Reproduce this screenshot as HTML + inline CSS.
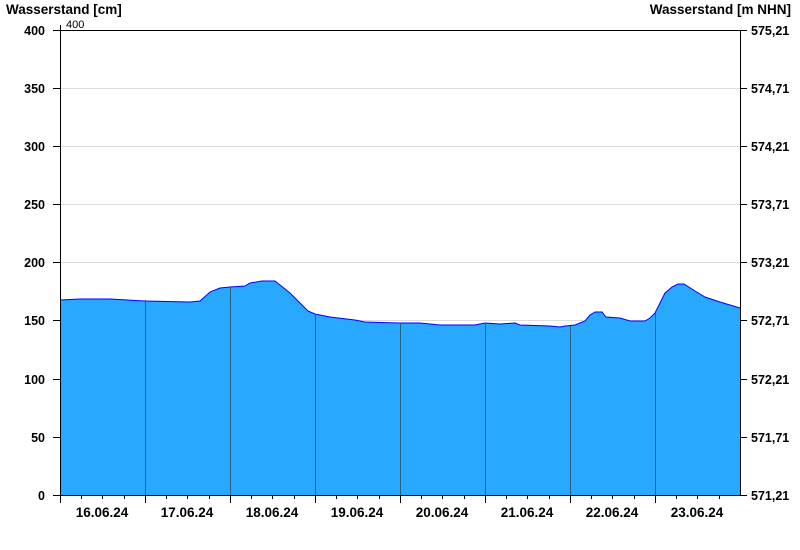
<!DOCTYPE html>
<html><head><style>body{margin:0;background:#fff}svg{display:block}text{font-family:"Liberation Sans",Arial,sans-serif}</style></head><body>
<svg width="800" height="550" xmlns="http://www.w3.org/2000/svg">
<g stroke="#dcdcdc" stroke-width="1">
<line x1="60" y1="88.5" x2="740" y2="88.5"/><line x1="60" y1="146.5" x2="740" y2="146.5"/><line x1="60" y1="204.5" x2="740" y2="204.5"/><line x1="60" y1="262.5" x2="740" y2="262.5"/><line x1="60" y1="320.5" x2="740" y2="320.5"/><line x1="60" y1="379.5" x2="740" y2="379.5"/><line x1="60" y1="437.5" x2="740" y2="437.5"/>
</g>
<path d="M60,495 L60,300 L80,299 L110,299 L145,301 L190,302 L200,301 L210,292 L220,288 L230,287 L245,286 L250,283 L262,281 L275,281 L280,285 L290,293 L300,303 L308,311 L315,314 L330,317 L355,320 L365,322 L400,323 L420,323 L440,325 L475,325 L485,323 L500,324 L515,323 L520,325 L550,326 L560,327 L565,326 L575,325 L585,321 L590,315 L595,312 L602,312 L606,317 L620,318 L630,321 L645,321 L650,318 L655,313 L660,303 L665,293 L672,287 L678,284 L684,284 L695,291 L705,297 L720,302 L730,305 L740,308 L740,495 Z" fill="#29a8ff"/>
<path d="M60,300 L80,299 L110,299 L145,301 L190,302 L200,301 L210,292 L220,288 L230,287 L245,286 L250,283 L262,281 L275,281 L280,285 L290,293 L300,303 L308,311 L315,314 L330,317 L355,320 L365,322 L400,323 L420,323 L440,325 L475,325 L485,323 L500,324 L515,323 L520,325 L550,326 L560,327 L565,326 L575,325 L585,321 L590,315 L595,312 L602,312 L606,317 L620,318 L630,321 L645,321 L650,318 L655,313 L660,303 L665,293 L672,287 L678,284 L684,284 L695,291 L705,297 L720,302 L730,305 L740,308" fill="none" stroke="#0000ff" stroke-width="1"/>
<g stroke="#2a5f80" stroke-width="1">
<line x1="145.5" y1="300" x2="145.5" y2="495"/><line x1="230.5" y1="287" x2="230.5" y2="495"/><line x1="315.5" y1="314" x2="315.5" y2="495"/><line x1="400.5" y1="323" x2="400.5" y2="495"/><line x1="485.5" y1="323" x2="485.5" y2="495"/><line x1="570.5" y1="326" x2="570.5" y2="495"/><line x1="655.5" y1="313" x2="655.5" y2="495"/>
</g>
<g stroke="#000" stroke-width="1">
<line x1="60" y1="30.5" x2="740" y2="30.5"/>
<line x1="60.5" y1="25" x2="60.5" y2="503"/>
<line x1="740.5" y1="30" x2="740.5" y2="495"/>
<line x1="53" y1="495.5" x2="740" y2="495.5"/>
<path d="M53,30.5H60M53,88.5H60M53,146.5H60M53,204.5H60M53,262.5H60M53,320.5H60M53,379.5H60M53,437.5H60"/>
<path d="M740,30.5H747M740,88.5H747M740,146.5H747M740,204.5H747M740,262.5H747M740,320.5H747M740,379.5H747M740,437.5H747M740,495.5H747"/>
<path d="M145.5,495V503M230.5,495V503M315.5,495V503M400.5,495V503M485.5,495V503M570.5,495V503M655.5,495V503"/>
<path d="M81.5,495V499M102.5,495V499M124.5,495V499M166.5,495V499M187.5,495V499M209.5,495V499M251.5,495V499M272.5,495V499M294.5,495V499M336.5,495V499M357.5,495V499M379.5,495V499M421.5,495V499M442.5,495V499M464.5,495V499M506.5,495V499M527.5,495V499M549.5,495V499M591.5,495V499M612.5,495V499M634.5,495V499M676.5,495V499M697.5,495V499M719.5,495V499"/>
</g>
<g font-weight="bold" fill="#000">
<text x="6" y="14" font-size="13.5">Wasserstand [cm]</text>
<text x="791" y="14" font-size="13.5" text-anchor="end">Wasserstand [m NHN]</text>
<g text-anchor="end" font-size="12.5">
<text x="45" y="35">400</text><text x="45" y="93">350</text><text x="45" y="151">300</text><text x="45" y="209">250</text><text x="45" y="267">200</text><text x="45" y="325">150</text><text x="45" y="384">100</text><text x="45" y="442">50</text><text x="45" y="500">0</text>
</g>
<g font-size="12.5">
<text x="751" y="35">575,21</text><text x="751" y="93">574,71</text><text x="751" y="151">574,21</text><text x="751" y="209">573,71</text><text x="751" y="267">573,21</text><text x="751" y="325">572,71</text><text x="751" y="384">572,21</text><text x="751" y="442">571,71</text><text x="751" y="500">571,21</text>
</g>
<g text-anchor="middle" font-size="13.5">
<text x="102" y="517">16.06.24</text><text x="187" y="517">17.06.24</text><text x="272" y="517">18.06.24</text><text x="357" y="517">19.06.24</text><text x="442" y="517">20.06.24</text><text x="527" y="517">21.06.24</text><text x="612" y="517">22.06.24</text><text x="697" y="517">23.06.24</text>
</g>
</g>
<text x="66" y="28" font-size="11" fill="#000">400</text>
</svg>
</body></html>
